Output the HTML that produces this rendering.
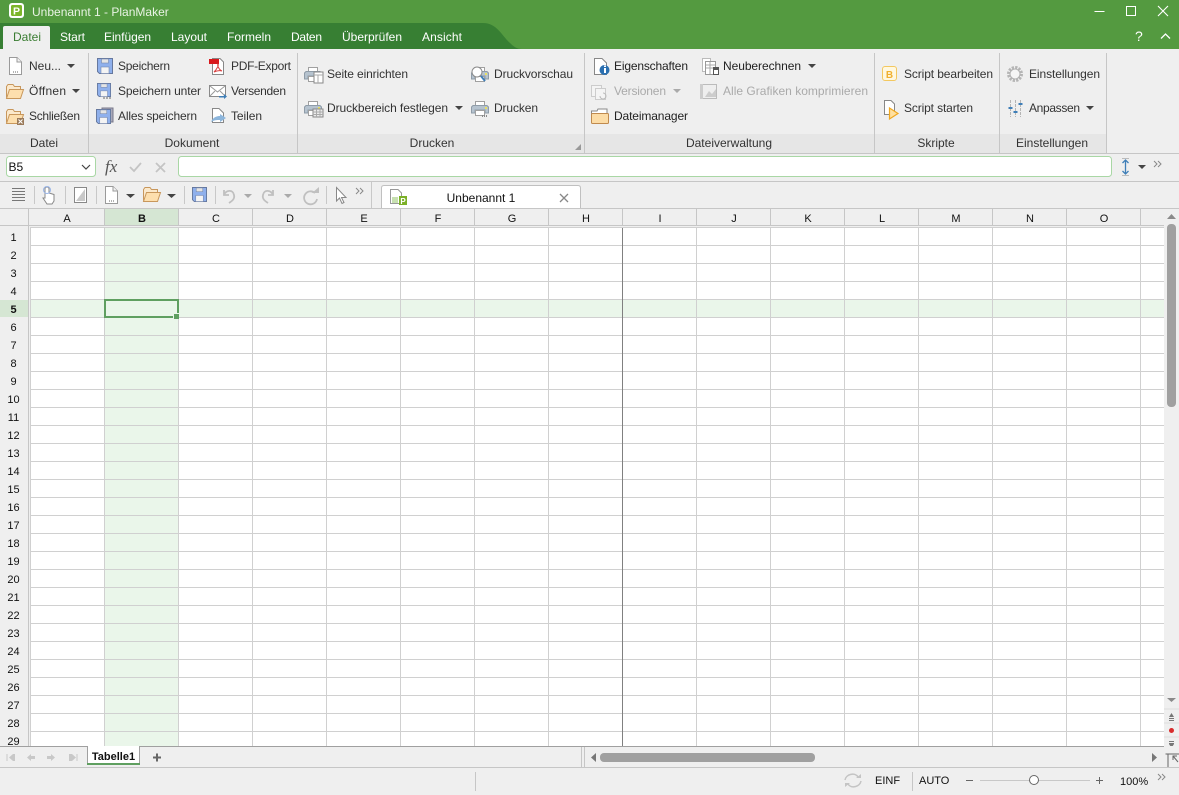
<!DOCTYPE html>
<html><head><meta charset="utf-8"><title>Unbenannt 1 - PlanMaker</title>
<style>
html,body{margin:0;padding:0;background:#efefef;width:1179px;height:795px;overflow:hidden}
svg{display:block;font-family:"Liberation Sans",sans-serif;font-size:12px;fill:#333}
.g{fill:#aaa}.l{fill:#444}.w{fill:#fff}.h{font-size:11px;fill:#111;text-anchor:middle}
.c{text-anchor:middle}.b{font-weight:bold}
</style></head><body>
<svg width="1179" height="795" viewBox="0 0 1179 795" xmlns="http://www.w3.org/2000/svg">
<defs>
<symbol id="page" viewBox="0 0 16 18" overflow="visible"><path d="M2.500 .5H10L14.500 5V17.500H2.500Z" fill="#fff" stroke="#9a9a9a"/><path d="M10 .5V5H14.500" fill="#f2f2f2" stroke="#9a9a9a"/><path d="M6 15h1M8 15h1M10 15h1" stroke="#666"/></symbol>
<symbol id="folder" viewBox="0 0 18 16" overflow="visible"><path d="M.5 13.500V2.500L2 .5H7L8.500 2.500H14.500V6" fill="#fbe9cc" stroke="#c8975c"/><path d="M.5 14.500L3.500 5.500H17.500L14.500 14.500Z" fill="#fddfae" stroke="#c8975c"/></symbol>
<symbol id="disk" viewBox="0 0 16 16" overflow="visible"><path d="M.5 .5H15.500V15.500H2.500L.5 13.500Z" fill="#8fb0ec" stroke="#66789e"/><rect x="4.500" y="1" width="7" height="4" fill="#e4e4e4" stroke="#7587ad" stroke-width=".6"/><rect x="4" y="9" width="8" height="6.500" fill="#f4f4f4" stroke="#7587ad" stroke-width=".6"/></symbol>
<symbol id="printer" viewBox="0 0 18 15" overflow="visible"><path d="M4.500 4.500V.5H13.500V4.500" fill="#fff" stroke="#a0a0a0"/><path d="M.5 12V6L2 4.500H16L17.500 6V12H14V9H4V12Z" fill="#b6c3cf" stroke="#8f9ca8"/><rect x="4.500" y="9.500" width="9" height="5" fill="#fff" stroke="#a0a0a0"/><rect x="14" y="6" width="2" height="2" fill="#e8e060"/></symbol>
<pattern id="vl" x="30" y="0" width="74" height="10" patternUnits="userSpaceOnUse"><rect x="0" y="0" width="1" height="10" fill="#d0d0d0"/></pattern>
<pattern id="hl" x="0" y="245" width="10" height="18" patternUnits="userSpaceOnUse"><rect x="0" y="0" width="10" height="1" fill="#d0d0d0"/></pattern>
</defs>

<!-- title -->
<rect width="1179" height="49" fill="#549a40"/>
<path d="M0 23H483C497 23 502 36 510 43C514 47 517 49 522 49H0Z" fill="#377f33"/>
<rect x="9" y="3" width="15" height="15" rx="3" fill="#fff"/>
<rect x="11" y="5" width="11" height="11" rx="1.500" fill="#7cb52a"/>
<text x="16.500" y="14.500" class="c b" style="font-size:10.500px;fill:#fff">P</text>
<text x="32" y="16" style="fill:#e9f3e4">Unbenannt 1 - PlanMaker</text>
<path d="M1094.500 11.500H1104.500" stroke="#fff" fill="none"/>
<rect x="1126.500" y="6.500" width="9" height="9" fill="none" stroke="#fff"/>
<path d="M1158 6L1168 16M1168 6L1158 16" stroke="#fff" stroke-width="1.100" fill="none"/>
<text x="1135" y="41" class="w" style="font-size:14px">?</text>
<path d="M1161 38.500L1165.500 34L1170 38.500" stroke="#fff" stroke-width="1.300" fill="none"/>

<path d="M3 49V28Q3 26 5 26H48Q50 26 50 28V49Z" fill="#efefef"/>
<text x="13" y="41" style="fill:#3a7d32" textLength="28">Datei</text>
<text x="60" y="41" class="w" textLength="25">Start</text><text x="104" y="41" class="w" textLength="47">Einfügen</text><text x="171" y="41" class="w" textLength="36">Layout</text><text x="227" y="41" class="w" textLength="44">Formeln</text><text x="291" y="41" class="w" textLength="31">Daten</text><text x="342" y="41" class="w" textLength="60">Überprüfen</text><text x="422" y="41" class="w" textLength="40">Ansicht</text>

<!-- ribbon -->
<rect y="49" width="1179" height="104" fill="#efefef"/>
<rect y="134" width="1106" height="19" fill="#e6e6e6"/>
<rect y="153" width="1179" height="1" fill="#c6c6c6"/>
<g fill="#c6c6c6"><rect x="88" y="53" width="1" height="100"/><rect x="297" y="53" width="1" height="100"/><rect x="584" y="53" width="1" height="100"/><rect x="874" y="53" width="1" height="100"/><rect x="999" y="53" width="1" height="100"/><rect x="1106" y="53" width="1" height="100"/></g>

<use href="#page" x="7" y="57" width="16" height="18"/>
<use href="#folder" x="6" y="84" width="18" height="16"/>
<use href="#folder" x="6" y="109" width="18" height="16"/>
<rect x="17" y="118" width="7" height="7" fill="#9a7a5a"/><path d="M18.500 119.500L22.500 123.500M22.500 119.500L18.500 123.500" stroke="#fff"/>
<text x="29" y="70">Neu...</text><path d="M67 64H75L71 68Z" fill="#444"/>
<text x="29" y="95" textLength="37">Öffnen</text><path d="M72 89H80L76 93Z" fill="#444"/>
<text x="29" y="120" textLength="51">Schließen</text>
<text x="44" y="147" class="c">Datei</text>

<use href="#disk" x="97" y="58" width="16" height="16"/>
<use href="#disk" x="97" y="83" width="14" height="14"/><path d="M103 98h2M106 98h2M109 98h2" stroke="#aaa" stroke-width="2"/>
<rect x="102" y="108" width="11" height="14" fill="#aab" stroke="#778"/><use href="#disk" x="96" y="109" width="15" height="15"/>
<text x="118" y="70" textLength="52">Speichern</text><text x="118" y="95" textLength="83">Speichern unter</text><text x="118" y="120" textLength="79">Alles speichern</text>
<path d="M212.500 58.500H220L223.500 62V74.500H212.500Z" fill="#fff" stroke="#888"/><rect x="209" y="59" width="10" height="5" fill="#d8181c"/><path d="M214 72C217 69 219 65 218 64C217 65 219 70 222 71C219 70 216 71 214 72Z" fill="none" stroke="#d84040"/>
<rect x="209.500" y="85.500" width="16" height="11" fill="#fff" stroke="#8a8a8a"/><path d="M210 86L217.500 92L225 86M210 96L215 91M225 96L220 91" fill="none" stroke="#9a9a9a"/><path d="M219 96H224V94L227 96.500L224 99V97.500H219Z" fill="#3f7fb8"/>
<path d="M212.500 108.500H219L223.500 113V122.500H212.500Z" fill="#fff" stroke="#888"/><path d="M211 122C213 117 217 116 220 116V114L226 118L220 122V120C217 120 214 120 211 122Z" fill="#8db6dc"/>
<text x="231" y="70" textLength="60">PDF-Export</text><text x="231" y="95" textLength="55">Versenden</text><text x="231" y="120" textLength="31">Teilen</text>
<text x="192" y="147" class="c">Dokument</text>

<use href="#printer" x="304" y="67" width="18" height="15"/><rect x="314" y="72" width="9" height="11" fill="#fff" stroke="#888"/><path d="M314 75h9M318 75v8" stroke="#aaa"/>
<use href="#printer" x="304" y="101" width="18" height="15"/><rect x="313" y="109" width="10" height="8" fill="#ececec" stroke="#888"/><path d="M313 112h10M313 114.500h10M316.500 109v8M320 109v8" stroke="#aaa"/>
<use href="#printer" x="471" y="67" width="18" height="15"/><circle cx="477" cy="72" r="5" fill="#fff" stroke="#8a8a8a"/><path d="M481 76L485 81" stroke="#3f7fb8" stroke-width="2"/>
<use href="#printer" x="471" y="101" width="18" height="15"/><path d="M482 116h1M484 116h1M486 116h1" stroke="#888" stroke-width="2"/>
<text x="327" y="78" textLength="81">Seite einrichten</text><text x="327" y="112" textLength="121">Druckbereich festlegen</text><path d="M455 106H463L459 110Z" fill="#444"/>
<text x="494" y="78" textLength="79">Druckvorschau</text><text x="494" y="112" textLength="44">Drucken</text>
<text x="432" y="147" class="c">Drucken</text>
<path d="M581 144V150H575Z" fill="#999"/>

<path d="M594.500 58.500H602L606.500 63V74.500H594.500Z" fill="#fff" stroke="#888"/><circle cx="604.500" cy="70" r="5" fill="#2a6fb0"/><rect x="604" y="68" width="2" height="5" fill="#fff"/><rect x="604" y="65.500" width="2" height="1.500" fill="#fff"/>
<rect x="591.500" y="85.500" width="10" height="11" fill="#f4f4f4" stroke="#ccc"/><rect x="595.500" y="88.500" width="10" height="11" fill="#f4f4f4" stroke="#ccc"/><path d="M600 96a3 3 0 1 0 3-3" fill="none" stroke="#bbb"/>
<path d="M591.500 115V111H597L598 109H607V115" fill="#fff" stroke="#8a8a8a"/><rect x="591.500" y="113.500" width="17" height="10" rx="1" fill="#fcdca6" stroke="#c08a4e"/>
<text x="614" y="70" style="fill:#222" textLength="74">Eigenschaften</text><text x="614" y="95" class="g" textLength="52">Versionen</text><path d="M673 89H681L677 93Z" fill="#aaa"/><text x="614" y="120" style="fill:#222" textLength="74">Dateimanager</text>
<rect x="702.500" y="58.500" width="8" height="13" fill="#fff" stroke="#bbb"/><rect x="705.500" y="61.500" width="10" height="13" fill="#fff" stroke="#999"/><path d="M706 65h9M706 68h9M710 62v12" stroke="#aaa"/><rect x="713.500" y="67.500" width="5" height="7" fill="#fff" stroke="#555"/><rect x="714" y="68" width="4" height="2" fill="#555"/>
<text x="723" y="70" style="fill:#222" textLength="78">Neuberechnen</text><path d="M808 64H816L812 68Z" fill="#444"/>
<rect x="702.500" y="84.500" width="14" height="14" fill="#eee" stroke="#bbb"/><path d="M705 97L709 91L712 94L716 89V97Z" fill="#ccc"/><rect x="700" y="84" width="3" height="15" fill="#ccc"/>
<text x="723" y="95" class="g" textLength="145">Alle Grafiken komprimieren</text>
<text x="729" y="147" class="c">Dateiverwaltung</text>

<rect x="882.500" y="66.500" width="14" height="14" rx="2.500" fill="#fff8e0" stroke="#f3c860"/><text x="889.500" y="78" class="c b" style="font-size:10px;fill:#f0b030">B</text>
<path d="M884.500 100.500H891L894.500 104V114.500H884.500Z" fill="#fff" stroke="#888"/><path d="M889.500 108V119L898 113.500Z" fill="#ffe0a0" stroke="#f0a820" stroke-width="1.200"/>
<text x="904" y="78" textLength="89">Script bearbeiten</text><text x="904" y="112" textLength="69">Script starten</text>
<text x="936" y="147" class="c">Skripte</text>

<circle cx="1015" cy="74" r="6.500" fill="none" stroke="#b4b4b4" stroke-width="3" stroke-dasharray="2.200 1.200"/><circle cx="1015" cy="74" r="5" fill="#f6f6f6" stroke="#b0b0b0"/>
<path d="M1010.500 100V117M1015.500 100V117M1020.500 100V117" stroke="#b4b4b4" stroke-dasharray="3 1"/><path d="M1008.500 108h4M1013.500 112h4M1018.500 104h4" stroke="#3f7fb8" stroke-width="2"/>
<text x="1029" y="78" textLength="71">Einstellungen</text><text x="1029" y="112" textLength="51">Anpassen</text><path d="M1086 106H1094L1090 110Z" fill="#444"/>
<text x="1052" y="147" class="c">Einstellungen</text>

<!-- formula bar -->
<rect y="154" width="1179" height="27" fill="#efefef"/>
<rect x="6.500" y="156.500" width="89" height="20" rx="3" fill="#fff" stroke="#a9d7a5"/>
<text x="8.500" y="171" style="fill:#111">B5</text>
<path d="M82 165L86 169L90 165" fill="none" stroke="#444" stroke-width="1.200"/>
<text x="105" y="172" style="font-family:'Liberation Serif',serif;font-style:italic;font-size:17px;fill:#555">fx</text>
<path d="M130 167L134 171L141 163" fill="none" stroke="#c4c4c4" stroke-width="1.800"/>
<path d="M156 163L165 172M165 163L156 172" fill="none" stroke="#c4c4c4" stroke-width="1.800"/>
<rect x="178.500" y="156.500" width="933" height="20" rx="3" fill="#fff" stroke="#a9d7a5"/>
<path d="M1122 158.500H1129M1122 175.500H1129" stroke="#bbb"/><path d="M1125.500 160V174" stroke="#3f7fb8" stroke-width="1.300"/><path d="M1122.500 163L1125.500 160L1128.500 163M1122.500 171L1125.500 174L1128.500 171" fill="none" stroke="#3f7fb8" stroke-width="1.300"/>
<path d="M1138 165H1146L1142 169Z" fill="#444"/>
<path d="M1154 161L1157 164L1154 167M1158 161L1161 164L1158 167" fill="none" stroke="#888"/>
<rect y="181" width="1179" height="1" fill="#c6c6c6"/>

<!-- toolbar -->
<rect y="182" width="1179" height="26" fill="#efefef"/>
<path d="M12 188.500H25M12 191.500H25M12 194.500H25M12 197.500H25M12 200.500H25" stroke="#777"/>
<g fill="#c8c8c8"><rect x="34" y="186" width="1" height="18"/><rect x="65" y="186" width="1" height="18"/><rect x="96" y="186" width="1" height="18"/><rect x="184" y="186" width="1" height="18"/><rect x="215" y="186" width="1" height="18"/><rect x="326" y="186" width="1" height="18"/><rect x="371" y="182" width="1" height="26"/></g>
<path d="M45 198V189Q45 187 47 187Q49 187 49 189V193L54 194.500V201L52 204H47L43 198Z" fill="#fff" stroke="#888"/><circle cx="47" cy="190" r="3.500" fill="none" stroke="#9ab6e8"/>
<rect x="74.500" y="187.500" width="12" height="15" fill="#fff" stroke="#888"/><path d="M76 201L85 189V201Z" fill="#c8c8c8"/>
<use href="#page" x="103" y="186" width="16" height="18"/><path d="M126 194H135L130.500 198Z" fill="#444"/>
<use href="#folder" x="143" y="187" width="18" height="16"/><path d="M167 194H176L171.500 198Z" fill="#444"/>
<use href="#disk" x="192" y="187" width="15" height="15"/>
<path d="M224 190V195H229M224 195C226 190 233 189 234 195C235 199 232 201 229 203" fill="none" stroke="#c0c0c0" stroke-width="1.800"/><path d="M244 194H252L248 198Z" fill="#aaa"/>
<path d="M273 190V195H268M273 195C271 190 264 189 263 195C262 199 265 201 268 203" fill="none" stroke="#c0c0c0" stroke-width="1.800"/><path d="M284 194H292L288 198Z" fill="#aaa"/>
<path d="M315 193A6.500 6.500 0 1 0 317 199" fill="none" stroke="#c0c0c0" stroke-width="1.800"/><path d="M312 193H319V187Z" fill="#c0c0c0"/>
<path d="M336.500 187.500V201L339.500 198L342 203.500L344 202.500L341.500 197.500H346Z" fill="#fff" stroke="#888"/>
<path d="M356 188L359 191L356 194M360 188L363 191L360 194" fill="none" stroke="#888"/>

<path d="M381.500 208V188Q381.500 185.500 384 185.500H578Q580.500 185.500 580.500 188V208" fill="#fff" stroke="#c0c0c0"/>
<path d="M390.500 189.500H398L401.500 193V203.500H390.500Z" fill="#fff" stroke="#999"/><rect x="392" y="197" width="6" height="6" fill="#c7e0b0"/><rect x="399" y="196" width="8" height="9" fill="#7cb028"/><text x="403" y="204" class="c b" style="font-size:8px;fill:#fff">P</text>
<text x="481" y="202" class="c" style="fill:#111">Unbenannt 1</text>
<path d="M560 194L568 202M568 194L560 202" stroke="#888" stroke-width="1.300" fill="none"/>

<!-- grid -->
<rect x="0" y="208" width="1179" height="20" fill="#efefef"/>
<rect x="0" y="228" width="30" height="518" fill="#efefef"/>
<rect x="30" y="228" width="1134" height="518" fill="#fff"/>
<rect x="105" y="228" width="73" height="518" fill="#eaf6ea"/>
<rect x="30" y="300" width="1134" height="17" fill="#eaf6ea"/>
<rect x="105" y="209" width="73" height="16" fill="#d5e6d3"/>
<rect x="0" y="300" width="28" height="17" fill="#d5e6d3"/>
<g shape-rendering="crispEdges">
<rect x="30" y="228" width="1134" height="518" fill="url(#hl)"/>
<rect x="30" y="228" width="1134" height="518" fill="url(#vl)"/>
<rect x="0" y="208" width="1179" height="1" fill="#c6c6c6"/>
<rect x="0" y="225" width="1164" height="1" fill="#c6c6c6"/>
<rect x="30" y="227" width="1134" height="1" fill="#d0d0d0"/>
<rect x="28" y="209" width="1" height="537" fill="#c6c6c6"/>
<rect x="104" y="209" width="1" height="16" fill="#c6c6c6"/><rect x="178" y="209" width="1" height="16" fill="#c6c6c6"/><rect x="252" y="209" width="1" height="16" fill="#c6c6c6"/><rect x="326" y="209" width="1" height="16" fill="#c6c6c6"/><rect x="400" y="209" width="1" height="16" fill="#c6c6c6"/><rect x="474" y="209" width="1" height="16" fill="#c6c6c6"/><rect x="548" y="209" width="1" height="16" fill="#c6c6c6"/><rect x="622" y="209" width="1" height="16" fill="#c6c6c6"/><rect x="696" y="209" width="1" height="16" fill="#c6c6c6"/><rect x="770" y="209" width="1" height="16" fill="#c6c6c6"/><rect x="844" y="209" width="1" height="16" fill="#c6c6c6"/><rect x="918" y="209" width="1" height="16" fill="#c6c6c6"/><rect x="992" y="209" width="1" height="16" fill="#c6c6c6"/><rect x="1066" y="209" width="1" height="16" fill="#c6c6c6"/><rect x="1140" y="209" width="1" height="16" fill="#c6c6c6"/>
<rect x="622" y="228" width="1" height="518" fill="#808080"/>
<rect x="104" y="299" width="75" height="2" fill="#5f9f60"/><rect x="104" y="316" width="72" height="2" fill="#5f9f60"/><rect x="104" y="299" width="2" height="19" fill="#5f9f60"/><rect x="177" y="299" width="2" height="14" fill="#5f9f60"/>
<rect x="173" y="313" width="6" height="6" fill="#eaf6ea"/><rect x="174" y="314" width="5" height="5" fill="#5f9f60"/>
</g>
<g>
<text x="67" y="222" class="h">A</text><text x="142" y="222" class="h b">B</text><text x="216" y="222" class="h">C</text><text x="290" y="222" class="h">D</text><text x="364" y="222" class="h">E</text><text x="438" y="222" class="h">F</text><text x="512" y="222" class="h">G</text><text x="586" y="222" class="h">H</text><text x="660" y="222" class="h">I</text><text x="734" y="222" class="h">J</text><text x="808" y="222" class="h">K</text><text x="882" y="222" class="h">L</text><text x="956" y="222" class="h">M</text><text x="1030" y="222" class="h">N</text><text x="1104" y="222" class="h">O</text>
<text x="13.500" y="241" class="h">1</text><text x="13.500" y="259" class="h">2</text><text x="13.500" y="277" class="h">3</text><text x="13.500" y="295" class="h">4</text><text x="13.500" y="313" class="h b">5</text><text x="13.500" y="331" class="h">6</text><text x="13.500" y="349" class="h">7</text><text x="13.500" y="367" class="h">8</text><text x="13.500" y="385" class="h">9</text><text x="13.500" y="403" class="h">10</text><text x="13.500" y="421" class="h">11</text><text x="13.500" y="439" class="h">12</text><text x="13.500" y="457" class="h">13</text><text x="13.500" y="475" class="h">14</text><text x="13.500" y="493" class="h">15</text><text x="13.500" y="511" class="h">16</text><text x="13.500" y="529" class="h">17</text><text x="13.500" y="547" class="h">18</text><text x="13.500" y="565" class="h">19</text><text x="13.500" y="583" class="h">20</text><text x="13.500" y="601" class="h">21</text><text x="13.500" y="619" class="h">22</text><text x="13.500" y="637" class="h">23</text><text x="13.500" y="655" class="h">24</text><text x="13.500" y="673" class="h">25</text><text x="13.500" y="691" class="h">26</text><text x="13.500" y="709" class="h">27</text><text x="13.500" y="727" class="h">28</text><text x="13.500" y="745" class="h">29</text>
</g>

<!-- vertical scrollbar -->
<rect x="1164" y="209" width="15" height="537" fill="#efefef"/>
<path d="M1167 219L1171.500 214L1176 219Z" fill="#8a8a8a"/>
<rect x="1167" y="224" width="9" height="183" rx="4" fill="#a0a0a0"/>
<path d="M1167 698H1176L1171.500 702Z" fill="#8a8a8a"/>
<path d="M1164 709H1179M1164 723H1179M1164 737H1179" stroke="#dcdcdc"/>
<path d="M1171.500 713L1174 717H1169Z" fill="#777"/><rect x="1169" y="718" width="5" height="1" fill="#777"/><rect x="1169" y="720" width="5" height="1" fill="#777"/>
<circle cx="1171.500" cy="730.500" r="2.500" fill="#d82c2c"/>
<rect x="1169" y="741" width="5" height="1" fill="#777"/><rect x="1169" y="743" width="5" height="1" fill="#777"/><path d="M1169 744H1174L1171.500 748Z" fill="#777"/>

<!-- bottom sheet row -->
<rect y="746" width="1179" height="21" fill="#efefef"/>
<rect y="746" width="1164" height="1" fill="#a0a0a0"/>
<rect y="767" width="1179" height="1" fill="#c6c6c6"/>
<path d="M7 754V761" stroke="#c8c8c8"/><path d="M15 754V761H13L9 757.500L13 754Z" fill="#c8c8c8"/>
<path d="M27 757.500L31 754V756H35V759H31V761Z" fill="#c8c8c8"/>
<path d="M55 757.500L51 754V756H47V759H51V761Z" fill="#c8c8c8"/>
<path d="M69 754H72L76 757.500L72 761H69Z" fill="#c8c8c8"/><path d="M77 754V761" stroke="#c8c8c8"/>
<rect x="87" y="746" width="53" height="18" fill="#fff"/><rect x="87" y="763" width="53" height="2" fill="#5f9f60"/>
<rect x="87" y="746" width="1" height="17" fill="#a0a0a0"/><rect x="139" y="746" width="1" height="17" fill="#a0a0a0"/>
<text x="113.500" y="760" class="c b" style="fill:#111;font-size:11px">Tabelle1</text>
<path d="M153 757.500H161M157 753.500V761.500" stroke="#666" stroke-width="2"/>
<rect x="581" y="747" width="1" height="20" fill="#c6c6c6"/><rect x="584" y="747" width="1" height="20" fill="#c6c6c6"/>
<path d="M596 753V762L591 757.500Z" fill="#777"/>
<rect x="600" y="753" width="215" height="9" rx="4" fill="#a0a0a0"/>
<path d="M1152 753V762L1157 757.500Z" fill="#777"/>
<path d="M1165.500 754H1179M1168 754V767M1173 760V756H1177M1173 756L1178 762" stroke="#666" fill="none"/>

<!-- status -->
<rect y="768" width="1179" height="27" fill="#efefef"/>
<rect x="475" y="772" width="1" height="19" fill="#c6c6c6"/>
<rect x="912" y="772" width="1" height="19" fill="#c6c6c6"/>
<path d="M845 780C846 774 855 772 858 777M861 781C860 787 851 789 848 784" fill="none" stroke="#c4c4c4" stroke-width="1.500"/><path d="M856 778H861V774ZM850 783H845V787Z" fill="#c4c4c4"/>
<text x="875" y="784" style="fill:#111;font-size:11px">EINF</text>
<text x="919" y="784" style="fill:#111;font-size:11px">AUTO</text>
<path d="M966 780.500H973" stroke="#666"/>
<rect x="980" y="780" width="110" height="1" fill="#c8c8c8"/>
<circle cx="1034" cy="780" r="4.500" fill="#fff" stroke="#666"/>
<path d="M1096 780.500H1103M1099.500 777V784" stroke="#666"/>
<text x="1120" y="785" style="fill:#111;font-size:11px">100%</text>
<path d="M1158 774L1161 777L1158 780M1162 774L1165 777L1162 780" fill="none" stroke="#888"/>
</svg>
</body></html>
